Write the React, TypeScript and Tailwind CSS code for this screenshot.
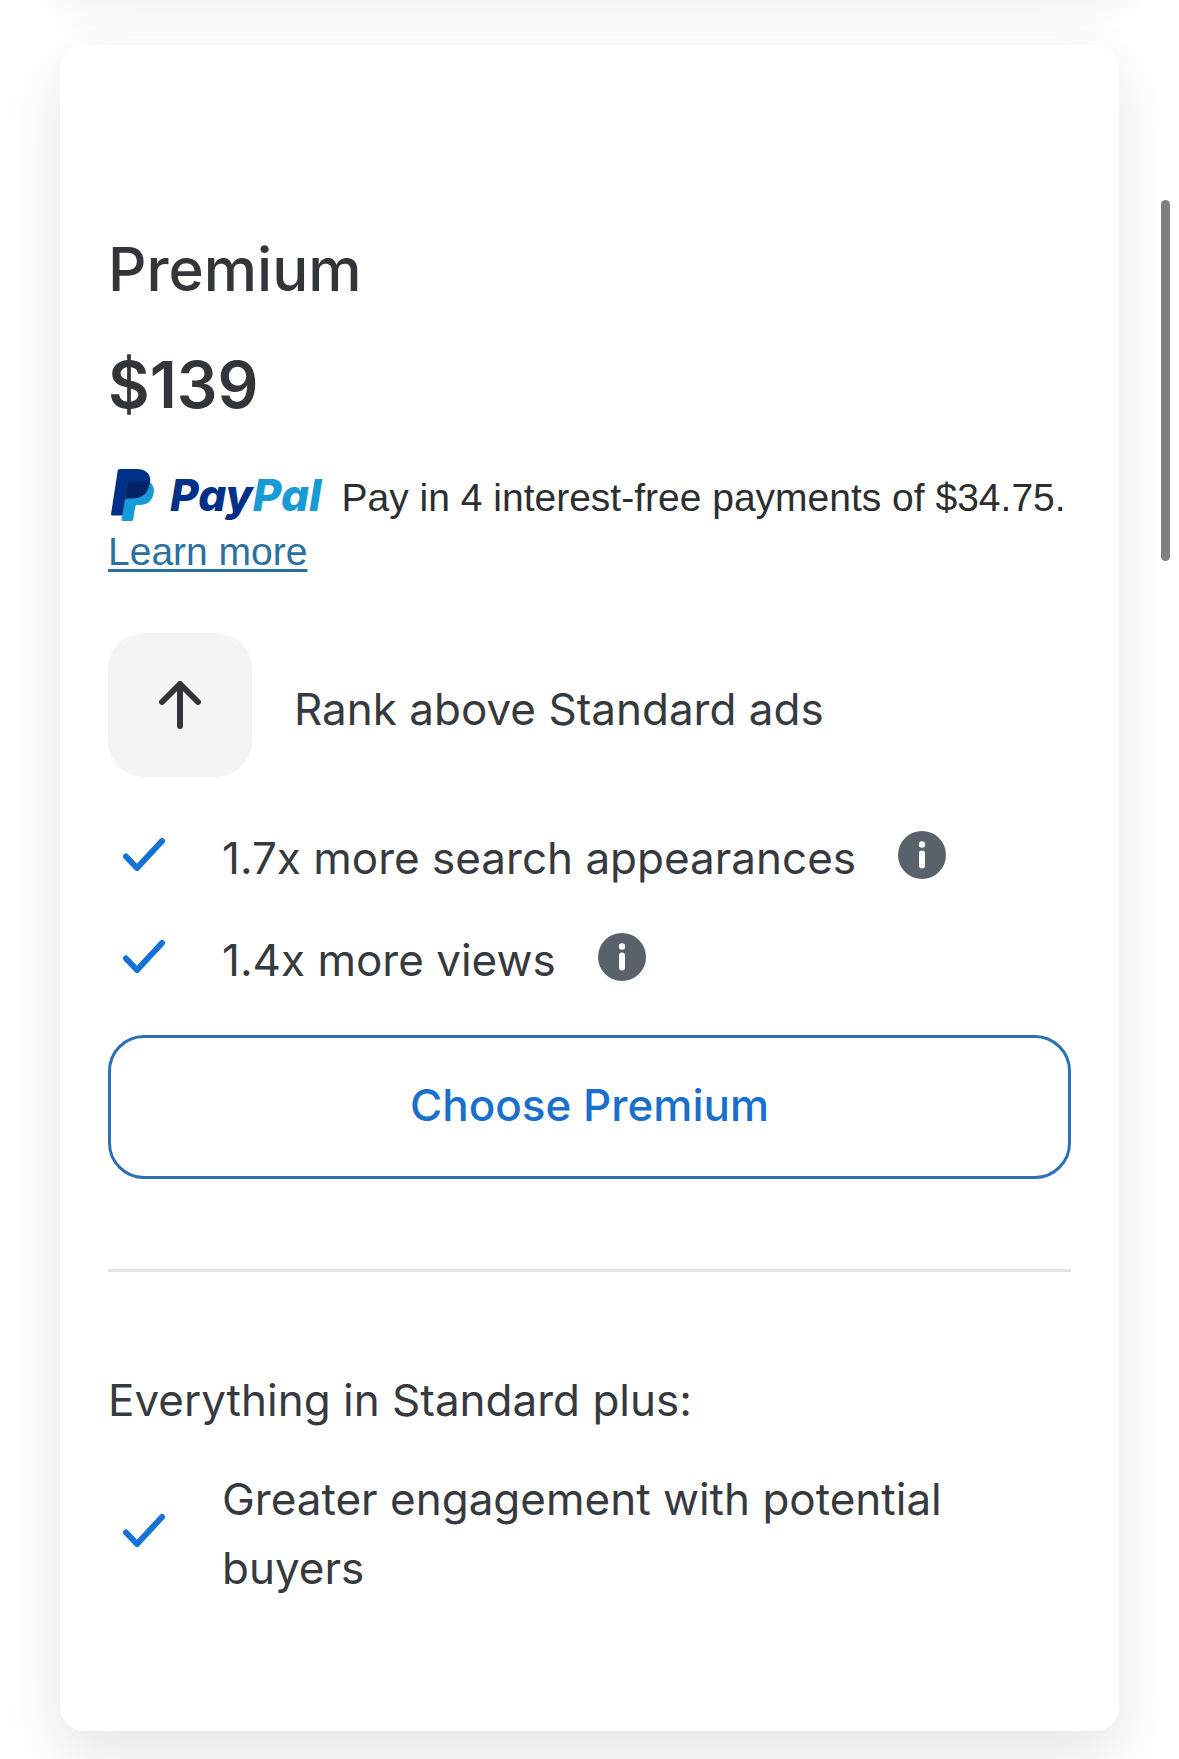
import type { ReactNode } from "react";

function PayPalLogo() {
  return (
    <span role="img" aria-label="PayPal" className="mr-5 inline-flex h-12 items-center gap-4 align-top">
      <svg viewBox="0 0 43 52" className="ml-[3px] h-[52px] w-[43px]">
        <path
          d="M9 0H26C35 0 40.500 5 39 14C37.500 24 31 29.500 21 29.500H17C15.500 29.500 15 30.500 14.700 32L12.500 45C12.300 46.200 11.800 46.500 11 46.500H1.500C.4 46.500-.1 46 .1 44.800L6.600 2.200C6.800.8 7.600 0 9 0Z"
          fill="#003087"
        />
        <path
          d="M38.800 13.500C42.500 15.800 43.700 20 42.400 25.500C40.800 32.500 35.800 36 28.500 36H26.500C25.200 36 24.400 36.800 24.200 38L22.300 50C22.100 51.400 21.400 52 20.200 52H11.800C10.900 52 10.500 51.400 10.600 50.600L14 30C14.300 29 15 28.600 16 28.600H21C31 28.600 37.200 24 38.800 13.500Z"
          fill="#169bd7"
        />
        <path
          d="M38.900 13.500C37.200 24.500 31 29.500 21 29.500H17C15.300 29.500 14.700 30.200 14.200 31.500L16.700 14.800C16.900 13.300 17.800 12.400 19.300 12.400H32C34.700 12.400 37 12.700 38.900 13.500Z"
          fill="#012169"
        />
      </svg>
      <span className="font-['Inter'] text-[44px] leading-[54px] font-extrabold text-[#003087] italic [font-feature-settings:'cv11']">
        Pay<span className="text-[#169bd7]">Pal</span>
      </span>
    </span>
  );
}

function ArrowUp() {
  return (
    <svg
      viewBox="0 0 42 48"
      className="h-12 w-[42px]"
      fill="none"
      stroke="#32363b"
      strokeWidth="6"
      strokeLinecap="round"
      strokeLinejoin="round"
    >
      <path d="M21 45V3M3 21L21 3L39 21" />
    </svg>
  );
}

function Check() {
  return (
    <svg
      viewBox="0 0 42 33"
      className="mr-[57px] ml-[15px] h-[33px] w-[42px] shrink-0"
      fill="none"
      stroke="#1272d6"
      strokeWidth="6"
      strokeLinecap="round"
      strokeLinejoin="round"
    >
      <path d="M3 18.500L14 30L39 3" />
    </svg>
  );
}

function InfoButton({ label }: { label: string }) {
  return (
    <button type="button" aria-label={label} className="ml-[42px] shrink-0">
      <svg viewBox="0 0 48 48" className="size-12">
        <circle cx="24" cy="24" r="24" fill="#59626b" />
        <circle cx="24" cy="13.500" r="3.200" fill="#fff" />
        <rect x="21" y="19.500" width="6" height="18" rx="3" fill="#fff" />
      </svg>
    </button>
  );
}

function Feature({ children, info }: { children: ReactNode; info?: string }) {
  return (
    <li className="flex items-center">
      <Check />
      <span className="pt-2">{children}</span>
      {info && <InfoButton label={info} />}
    </li>
  );
}

export default function App() {
  return (
    <main className="relative overflow-hidden bg-white px-[60px] pb-7 font-['Inter',sans-serif] text-[44px] leading-[69px] tracking-normal text-[#36393d]">
      {/* bottom edge of the previous plan card */}
      <div className="-mt-[126px] mb-[75px] h-24 rounded-3xl bg-white shadow-[0_24px_60px_rgba(0,0,0,0.1)]" />

      <section className="rounded-3xl bg-white px-12 pt-[182px] pb-32 shadow-[0_24px_60px_rgba(0,0,0,0.1)]">
        <h2 className="text-[60px] leading-[84px] font-medium text-[#32363b]">Premium</h2>
        <p className="mt-8 text-[64px] leading-[84px] font-semibold text-[#32363b]">$139</p>

        <p className="mt-11 font-['Liberation_Sans',sans-serif] text-[39px] leading-[54px] text-[#2c2e2f]">
          <PayPalLogo />
          Pay in 4 interest-free payments of $34.75.{" "}
          <a href="#learn-more" className="text-[#2a70a0] underline decoration-3 underline-offset-4">
            Learn more
          </a>
        </p>

        <div className="mt-[54px] flex items-center gap-[42px]">
          <div className="flex size-36 shrink-0 items-center justify-center rounded-[36px] bg-[#f3f4f6]">
            <ArrowUp />
          </div>
          <span className="pt-2">Rank above Standard ads</span>
        </div>

        <ul className="mt-[39px] flex flex-col gap-[25px]">
          <Feature info="About search appearances">1.7x more search appearances</Feature>
          <Feature info="About views">1.4x more views</Feature>
        </ul>

        <button
          type="button"
          className="mt-10 h-36 w-full rounded-[36px] border-3 border-[#2b70b4] pb-1 font-medium text-[#1a6fcd]"
        >
          Choose Premium
        </button>

        <hr className="mt-[90px] border-t-3 border-[#e3e5e6]" />

        <p className="mt-[94px]">Everything in Standard plus:</p>
        <ul className="mt-[22px]">
          <Feature>Greater engagement with potential buyers</Feature>
        </ul>
      </section>

      {/* scroll thumb */}
      <div className="absolute top-[200px] right-[9px] h-[361px] w-[9px] rounded-full bg-[#808080]" />
    </main>
  );
}
